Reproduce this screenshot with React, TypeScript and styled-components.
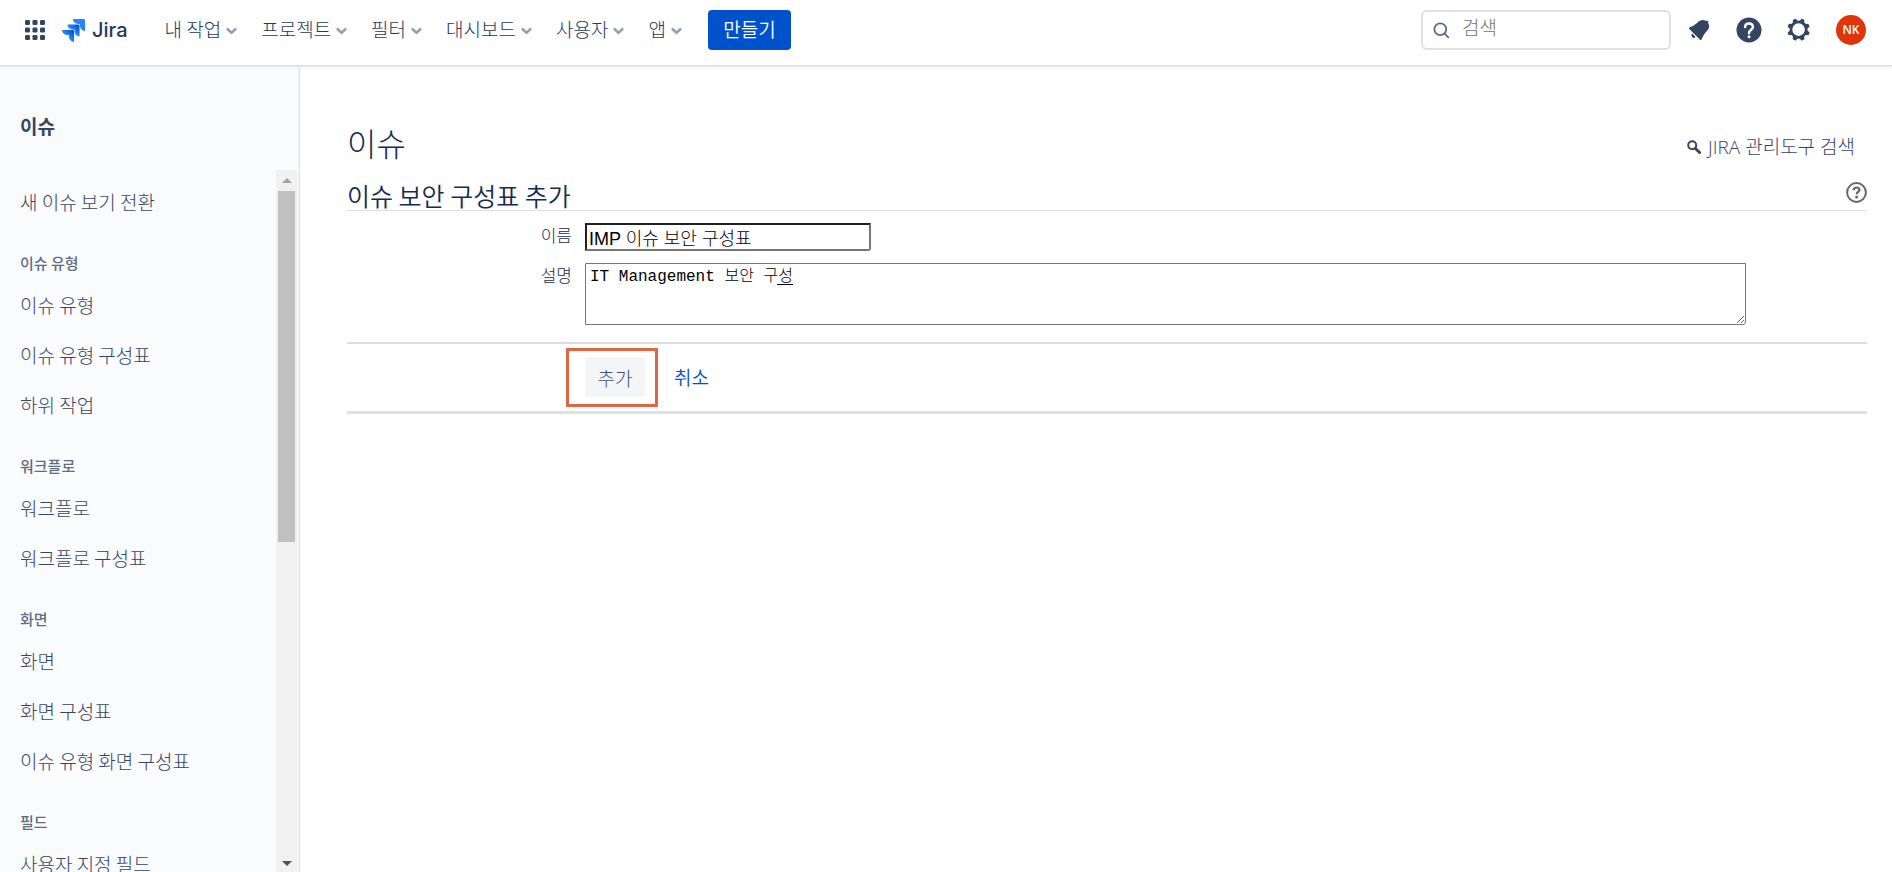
import React from "react";
import styled, { createGlobalStyle } from "styled-components";

const sans = `"Open Sans", "Noto Sans CJK KR", sans-serif`;
const korean = `"Noto Sans CJK KR", sans-serif`;

const GlobalStyle = createGlobalStyle`
  * { box-sizing: border-box; }
  body { margin: 0; background: #fff; color: #172b4d; font-family: ${korean}; font-weight: 300; }
  button, input, textarea { font-family: inherit; font-weight: inherit; }
  a { text-decoration: none; color: inherit; }
`;

const Page = styled.div`
  display: flex;
  flex-direction: column;
  height: 100vh;
  overflow: hidden;
`;

const Header = styled.header`
  display: flex;
  align-items: flex-start;
  flex: none;
  height: 65px;
  padding: 10px 26px 0 25px;
  position: relative;
  z-index: 1;
  background: #fff;
  box-shadow: 0 1px 1px #d8dbe1, 0 3px 3px #eff0f3;
`;

const HeaderInner = styled.div`
  display: flex;
  align-items: center;
  flex: 1;
  height: 40px;
`;

const IconButton = styled.button`
  display: flex;
  align-items: center;
  justify-content: center;
  padding: 0;
  border: 0;
  background: none;
  color: #344563;
`;

const Brand = styled.a`
  display: flex;
  align-items: center;
  gap: 7px;
  margin: 0 37px 0 17px;
  font: 500 20px/30px Inter, sans-serif;
  color: #253858;
`;

const Nav = styled.nav`
  display: flex;
  gap: 24px;
  margin-right: 26px;
`;

const NavButton = styled.button`
  display: flex;
  align-items: center;
  gap: 5px;
  padding: 0;
  border: 0;
  background: none;
  color: #253858;
  font-size: 19px;
  line-height: 38px;
  padding-bottom: 2px;
  white-space: nowrap;

  svg { margin-top: 3px; }
`;

const CreateButton = styled.button`
  width: 83px;
  height: 40px;
  padding: 0 0 2px;
  border: 0;
  border-radius: 4px;
  background: #0052cc;
  color: #fff;
  font-size: 19px;
  font-weight: 350;
  line-height: 38px;
`;

const SearchBox = styled.label`
  display: flex;
  align-items: center;
  gap: 12px;
  width: 250px;
  height: 40px;
  margin-left: auto;
  padding: 0 10px;
  border: 2px solid #dfe1e6;
  border-radius: 6px;
  color: #5e6c84;
`;

const SearchInput = styled.input`
  flex: 1;
  min-width: 0;
  height: 36px;
  padding: 0 0 8px;
  border: 0;
  outline: 0;
  background: none;
  font-size: 19px;
  &::placeholder { color: #757575; }
`;

const Actions = styled.div`
  display: flex;
  align-items: center;
  gap: 20px;
  margin-left: 13px;
`;

const Avatar = styled.button`
  width: 30px;
  height: 30px;
  margin-left: 2px;
  padding: 0;
  border: 0;
  border-radius: 50%;
  background: #de350b;
  color: #fff;
  font: 600 12px/30px "Open Sans", sans-serif;
`;

const Body = styled.div`
  display: flex;
  flex: 1;
  min-height: 0;
`;

const Sidebar = styled.aside`
  display: flex;
  flex-direction: column;
  flex: none;
  width: 300px;
  padding-right: 1px;
  border-right: 1px solid #dfe0e3;
  box-shadow: inset -1px 0 #f1f2f4;
  background: #fafbfc;
  color: #344563;
`;

const SidebarTitle = styled.h2`
  flex: none;
  height: 105px;
  margin: 0;
  padding: 47px 20px 0;
  font-size: 19px;
  font-weight: 700;
  line-height: 28px;
`;

const SidebarScroll = styled.div`
  display: flex;
  flex: 1;
  min-height: 0;
`;

const MenuArea = styled.nav`
  flex: 1;
  overflow: hidden;
  padding: 7px 20px 0;
`;

const MenuHeading = styled.h3`
  height: 53px;
  margin: 0;
  padding-top: 25px;
  color: #5e6c84;
  font-size: 15px;
  font-weight: 500;
  line-height: 22px;
`;

const MenuLink = styled.a`
  display: block;
  font-size: 19px;
  line-height: 50px;
  white-space: nowrap;
`;

const ScrollTrack = styled.div`
  display: flex;
  flex-direction: column;
  width: 21px;
  margin-right: 1px;
  background: #f1f1f1;
`;

const ScrollArrow = styled.div<{ $down?: boolean }>`
  display: flex;
  align-items: center;
  justify-content: center;
  flex: none;
  height: ${(p) => (p.$down ? "17px" : "21px")};
  margin-top: ${(p) => (p.$down ? "auto" : "0")};
  &::before {
    content: "";
    border: 5px solid transparent;
    border-top-width: ${(p) => (p.$down ? "5px" : "0")};
    border-bottom-width: ${(p) => (p.$down ? "0" : "5px")};
    border-top-color: #505050;
    border-bottom-color: #a3a3a3;
  }
`;

const ScrollThumb = styled.div`
  height: 50%;
  margin: 0 2px;
  background: #c1c1c1;
`;

const Main = styled.main`
  flex: 1;
  min-width: 0;
  padding: 57px 25px 0 47px;
`;

const TitleRow = styled.div`
  display: flex;
  align-items: flex-end;
  justify-content: space-between;
`;

const PageTitle = styled.h1`
  margin: 0;
  padding-bottom: 2px;
  font-size: 32px;
  font-weight: 300;
  line-height: 40px;
`;

const AdminSearch = styled.a`
  display: flex;
  align-items: center;
  gap: 7px;
  padding-right: 12px;
  color: #344563;
  font-family: ${sans};
  font-size: 19px;
  line-height: 34px;
`;

const SectionRow = styled.div`
  display: flex;
  align-items: flex-start;
  justify-content: space-between;
  margin-top: 18px;
  border-bottom: 1px solid #ddd;
`;

const SectionTitle = styled.h2`
  margin: 0;
  padding-bottom: 2px;
  font-size: 25px;
  font-weight: 350;
  line-height: 26px;
`;

const Form = styled.form`
  display: flex;
  flex-direction: column;
  gap: 12px;
  padding-top: 12px;
`;

const FieldRow = styled.div`
  display: flex;
  align-items: flex-start;
  gap: 13px;
  padding-right: 121px;
`;

const FieldLabel = styled.label`
  width: 225px;
  flex: none;
  font-size: 17px;
  line-height: 24px;
  text-align: right;
`;

const TextField = styled.input`
  width: 286px;
  height: 28px;
  padding: 0 2px;
  border: 2px solid #767676;
  border-top-color: #212121;
  border-left-color: #212121;
  border-radius: 0 0 3px 0;
  outline: 0;
  color: #000;
  font-family: "Liberation Sans", "Noto Sans CJK KR", sans-serif;
  font-size: 18px;
`;

const AreaWrap = styled.div`
  position: relative;
  display: flex;
  flex: 1;
`;

const TextArea = styled.textarea`
  width: 100%;
  height: 62px;
  padding: 2px 4px;
  border: 1px solid #767676;
  border-radius: 0 0 3px 0;
  outline: 0;
  color: #000;
  font-family: "Liberation Mono", "Noto Sans CJK KR", monospace;
  font-size: 16px;
  line-height: 22px;
`;

const CompositionLine = styled.span`
  position: absolute;
  top: 21px;
  left: 192px;
  width: 16px;
  height: 1px;
  background: #000;
`;

const FormFooter = styled.div`
  display: flex;
  align-items: center;
  gap: 29px;
  margin-top: 5px;
  padding: 13px 0 14px 238px;
  border-top: 2px solid #ddd;
  border-bottom: 3px solid #dfe1e6;
`;

const SubmitWrap = styled.div`
  position: relative;
  display: flex;
`;

const SubmitButton = styled.button`
  width: 60px;
  height: 40px;
  padding: 0;
  border: 0;
  border-radius: 4px;
  background: #f4f5f7;
  color: #42526e;
  font-size: 19px;
`;

const Highlight = styled.span`
  position: absolute;
  inset: -9px -13px -10px -19px;
  border: 3px solid #de6645;
  border-radius: 1px;
  pointer-events: none;
`;

const CancelLink = styled.a`
  color: #0052cc;
  font-size: 19px;
  font-weight: 350;
  line-height: 40px;
`;

const AppSwitcherIcon = () => (
  <svg width="20" height="20" viewBox="0 0 20 20" fill="currentColor" aria-hidden="true">
    {[0, 7.5, 15].map((y) =>
      [0, 7.5, 15].map((x) => <rect key={`${x}-${y}`} x={x} y={y} width="5" height="5" rx="1.2" />)
    )}
  </svg>
);

const JiraLogo = () => (
  <svg width="23" height="23" viewBox="0 0 24 24" aria-hidden="true">
    <defs>
      <linearGradient id="jiraMid" x1="18" y1="6" x2="12" y2="12" gradientUnits="userSpaceOnUse">
        <stop offset="0.15" stopColor="#0052cc" />
        <stop offset="1" stopColor="#2684ff" />
      </linearGradient>
      <linearGradient id="jiraLow" x1="12.5" y1="11.5" x2="6" y2="18" gradientUnits="userSpaceOnUse">
        <stop offset="0.15" stopColor="#0052cc" />
        <stop offset="1" stopColor="#2684ff" />
      </linearGradient>
    </defs>
    <path fill="#2684ff" d="M23.013 0H11.455a5.215 5.215 0 0 0 5.215 5.215h2.129v2.057A5.215 5.215 0 0 0 24 12.483V1.005A1.001 1.001 0 0 0 23.013 0Z" />
    <path fill="url(#jiraMid)" d="M17.294 5.757H5.736a5.215 5.215 0 0 0 5.215 5.214h2.129v2.058a5.218 5.218 0 0 0 5.215 5.214V6.758a1.001 1.001 0 0 0-1.001-1.001z" />
    <path fill="url(#jiraLow)" d="M11.571 11.513H0a5.218 5.218 0 0 0 5.232 5.215h2.13v2.057A5.215 5.215 0 0 0 12.575 24V12.518a1.005 1.005 0 0 0-1.005-1.005z" />
  </svg>
);

const Chevron = () => (
  <svg width="11" height="8" viewBox="0 0 11 8" fill="none" stroke="#97a0af" strokeWidth="2.600" strokeLinecap="round" strokeLinejoin="round" aria-hidden="true">
    <path d="M1.700 2.200 5.500 5.800l3.800-3.600" />
  </svg>
);

const SearchIcon = () => (
  <svg width="17" height="17" viewBox="0 0 17 17" fill="none" stroke="currentColor" strokeWidth="1.8" strokeLinecap="round" aria-hidden="true">
    <circle cx="7.3" cy="7.3" r="5.9" />
    <path d="M11.7 11.7l3.6 3.6" />
  </svg>
);

const BoldSearchIcon = () => (
  <svg width="14" height="14" viewBox="0 0 14 14" fill="none" stroke="currentColor" aria-hidden="true">
    <circle cx="5.2" cy="5.2" r="4" strokeWidth="2" />
    <path d="M8.4 8.4l4.2 4.2" strokeWidth="2.8" strokeLinecap="round" />
  </svg>
);

const BellIcon = () => (
  <svg width="30" height="30" viewBox="0 0 24 24" fill="currentColor" aria-hidden="true">
    <path d="M6.485 17.669a2 2 0 002.829 0l-2.829-2.83a2 2 0 000 2.83zm4.897-12.191l-.725.725c-.782.782-2.21 1.813-3.206 2.311l-3.017 1.509c-.495.248-.584.774-.187 1.171l8.556 8.556c.398.396.922.313 1.171-.188l1.51-3.016c.494-.988 1.526-2.42 2.311-3.206l.725-.726a5.048 5.048 0 00.64-6.356 1.01 1.01 0 10-1.354-1.494c-.023.025-.046.049-.066.075a5.043 5.043 0 00-2.788-.84 5.036 5.036 0 00-3.57 1.478z" />
  </svg>
);

const HelpIcon = () => (
  <svg width="30" height="30" viewBox="0 0 24 24" aria-hidden="true">
    <circle cx="12" cy="12" r="10" fill="currentColor" />
    <path d="M8.9 9.6C8.9 7.8 10.200 6.700 12 6.700s3.100 1.100 3.100 2.800c0 2.400-3.100 2.300-3.100 5" fill="none" stroke="#fff" strokeWidth="2" strokeLinecap="round" />
    <circle cx="12" cy="17.300" r="1.200" fill="#fff" />
  </svg>
);

const GearIcon = () => (
  <svg width="30" height="30" viewBox="0 0 24 24" fill="currentColor" aria-hidden="true">
    <path d="M11.701 16.7a5.002 5.002 0 110-10.003 5.002 5.002 0 010 10.004m8.368-3.117a1.995 1.995 0 01-1.346-1.885c0-.876.563-1.613 1.345-1.885a.48.48 0 00.315-.574 8.947 8.947 0 00-.836-1.993.477.477 0 00-.598-.195 2.04 2.04 0 01-1.29.08 1.988 1.988 0 01-1.404-1.395 2.04 2.04 0 01.076-1.297.478.478 0 00-.196-.597 8.98 8.98 0 00-1.975-.826.479.479 0 00-.574.314 1.995 1.995 0 01-1.885 1.346 1.994 1.994 0 01-1.884-1.345.482.482 0 00-.575-.315c-.708.2-1.379.485-2.004.842a.47.47 0 00-.198.582A2.002 2.002 0 014.445 7.06a.478.478 0 00-.595.196 8.946 8.946 0 00-.833 1.994.48.48 0 00.308.572 1.995 1.995 0 011.323 1.877c0 .867-.552 1.599-1.324 1.877a.479.479 0 00-.308.57 8.99 8.99 0 00.723 1.79.477.477 0 00.624.194c.595-.273 1.343-.264 2.104.238.117.077.225.185.302.3.527.8.512 1.58.198 2.188a.473.473 0 00.168.628 8.946 8.946 0 002.11.897.474.474 0 00.57-.313 1.995 1.995 0 011.886-1.353c.878 0 1.618.567 1.887 1.353a.475.475 0 00.57.313 8.964 8.964 0 002.084-.883.473.473 0 00.167-.631c-.318-.608-.337-1.393.191-2.195.077-.116.185-.225.302-.302.772-.511 1.527-.513 2.125-.23a.477.477 0 00.628-.19 8.925 8.925 0 00.728-1.793.478.478 0 00-.314-.573" />
  </svg>
);

const HelpOutlineIcon = () => (
  <svg width="21" height="21" viewBox="0 0 21 21" fill="none" stroke="#666" aria-hidden="true">
    <circle cx="10.500" cy="10.500" r="9.400" strokeWidth="2" />
    <path d="M7.600 8.200c0-1.700 1.200-2.700 2.900-2.700s2.900 1 2.900 2.500c0 2-2.700 2-2.700 4.300" strokeWidth="2.200" />
    <circle cx="10.600" cy="15" r="1.500" fill="#666" stroke="none" />
  </svg>
);

const navItems = ["내 작업", "프로젝트", "필터", "대시보드", "사용자", "앱"];

const menuGroups: { heading?: string; items: string[] }[] = [
  { items: ["새 이슈 보기 전환"] },
  { heading: "이슈 유형", items: ["이슈 유형", "이슈 유형 구성표", "하위 작업"] },
  { heading: "워크플로", items: ["워크플로", "워크플로 구성표"] },
  { heading: "화면", items: ["화면", "화면 구성표", "이슈 유형 화면 구성표"] },
  { heading: "필드", items: ["사용자 지정 필드"] },
];

export default function App() {
  return (
    <Page>
      <GlobalStyle />
      <Header>
        <HeaderInner>
          <IconButton aria-label="앱 전환">
            <AppSwitcherIcon />
          </IconButton>
          <Brand href="#">
            <JiraLogo />
            Jira
          </Brand>
          <Nav>
            {navItems.map((item) => (
              <NavButton key={item}>
                {item}
                <Chevron />
              </NavButton>
            ))}
          </Nav>
          <CreateButton>만들기</CreateButton>
          <SearchBox>
            <SearchIcon />
            <SearchInput type="text" placeholder="검색" aria-label="검색" />
          </SearchBox>
          <Actions>
            <IconButton aria-label="알림">
              <BellIcon />
            </IconButton>
            <IconButton aria-label="도움말">
              <HelpIcon />
            </IconButton>
            <IconButton aria-label="설정">
              <GearIcon />
            </IconButton>
            <Avatar>NK</Avatar>
          </Actions>
        </HeaderInner>
      </Header>
      <Body>
        <Sidebar>
          <SidebarTitle>이슈</SidebarTitle>
          <SidebarScroll>
            <MenuArea>
              {menuGroups.map((group, index) => (
                <React.Fragment key={index}>
                  {group.heading && <MenuHeading>{group.heading}</MenuHeading>}
                  {group.items.map((item) => (
                    <MenuLink key={item} href="#">
                      {item}
                    </MenuLink>
                  ))}
                </React.Fragment>
              ))}
            </MenuArea>
            <ScrollTrack>
              <ScrollArrow />
              <ScrollThumb />
              <ScrollArrow $down />
            </ScrollTrack>
          </SidebarScroll>
        </Sidebar>
        <Main>
          <TitleRow>
            <PageTitle>이슈</PageTitle>
            <AdminSearch href="#">
              <BoldSearchIcon />
              JIRA 관리도구 검색
            </AdminSearch>
          </TitleRow>
          <SectionRow>
            <SectionTitle>이슈 보안 구성표 추가</SectionTitle>
            <IconButton aria-label="도움말">
              <HelpOutlineIcon />
            </IconButton>
          </SectionRow>
          <Form>
            <FieldRow>
              <FieldLabel htmlFor="scheme-name">이름</FieldLabel>
              <TextField id="scheme-name" type="text" defaultValue="IMP 이슈 보안 구성표" />
            </FieldRow>
            <FieldRow>
              <FieldLabel htmlFor="scheme-description">설명</FieldLabel>
              <AreaWrap>
                <TextArea id="scheme-description" spellCheck={false} defaultValue="IT Management 보안 구성" />
                <CompositionLine />
              </AreaWrap>
            </FieldRow>
            <FormFooter>
              <SubmitWrap>
                <SubmitButton type="submit">추가</SubmitButton>
                <Highlight />
              </SubmitWrap>
              <CancelLink href="#">취소</CancelLink>
            </FormFooter>
          </Form>
        </Main>
      </Body>
    </Page>
  );
}
